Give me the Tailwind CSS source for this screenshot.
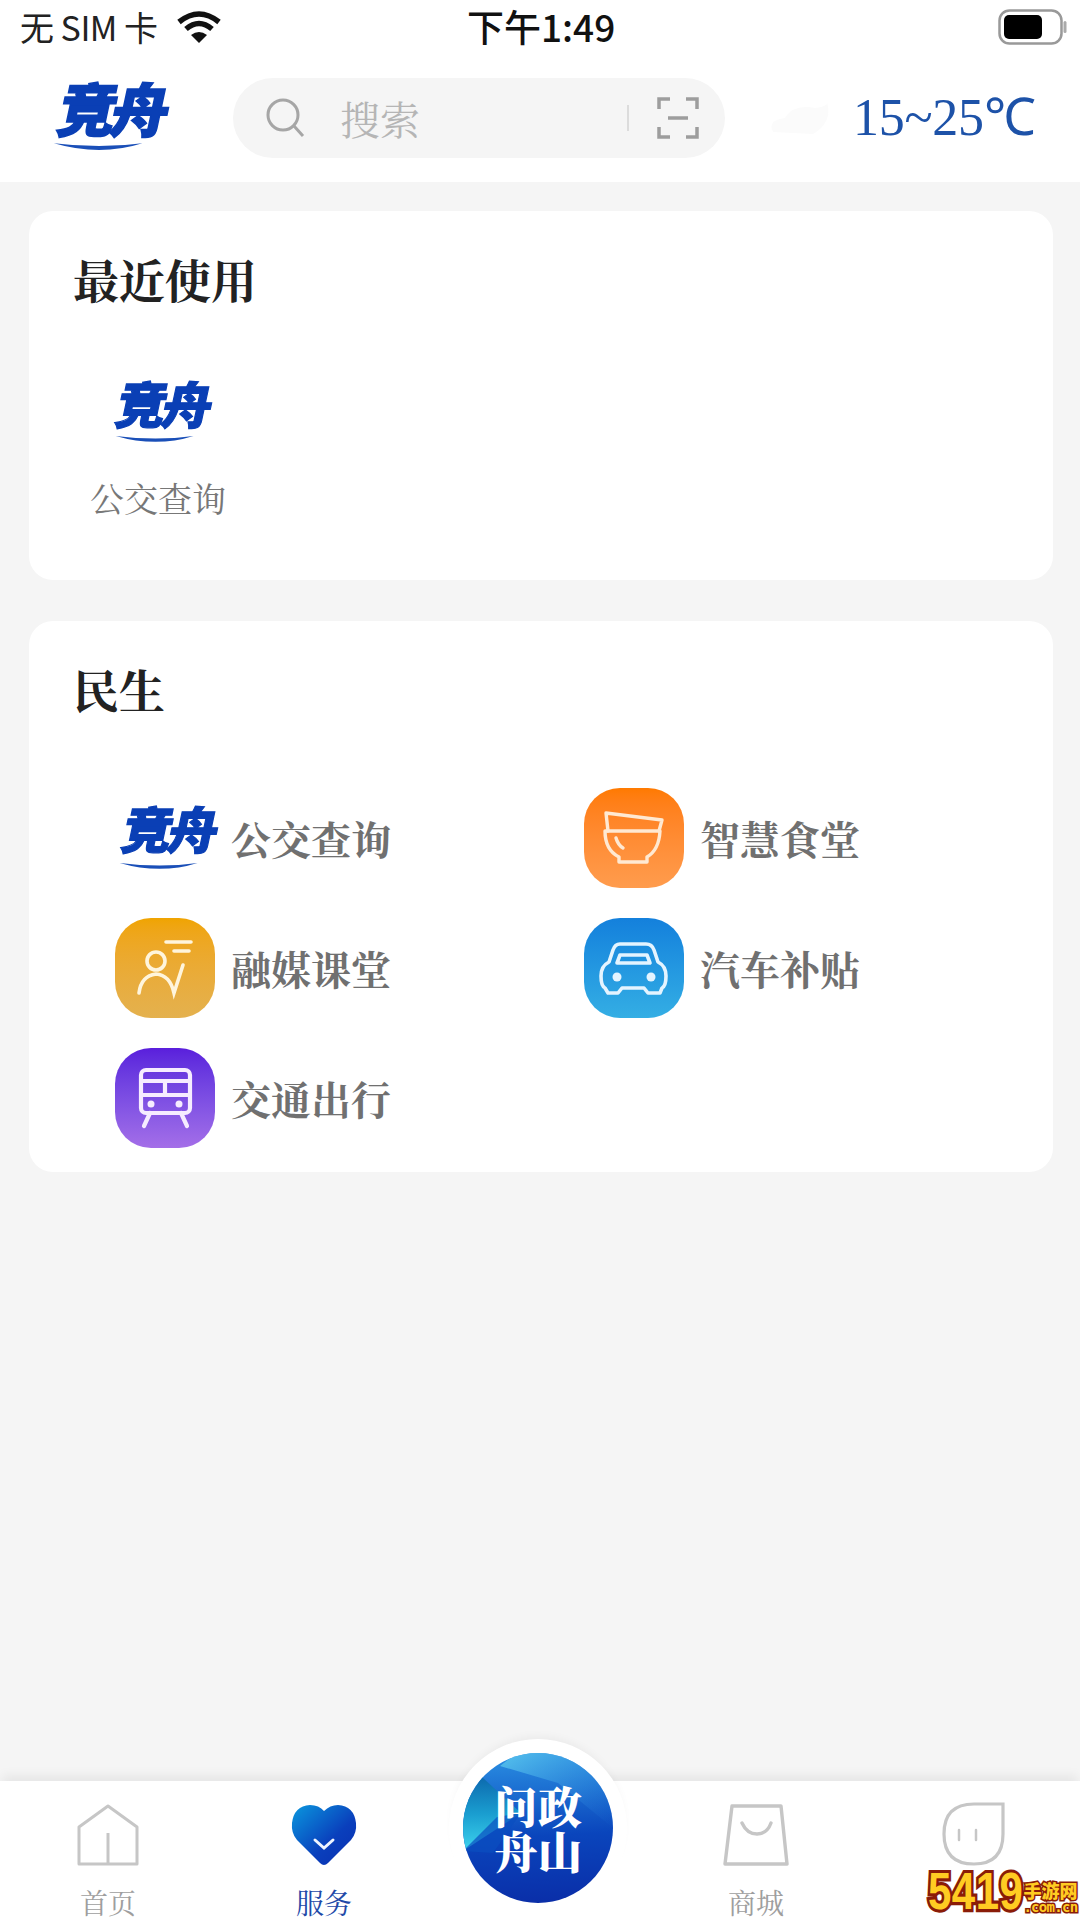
<!DOCTYPE html>
<html lang="zh">
<head>
<meta charset="utf-8">
<script src="https://cdn.jsdelivr.net/npm/@tailwindcss/browser@4"></script>
</head>
<body class="m-0">
<div class="relative w-[1080px] h-[1920px] overflow-hidden flex flex-col bg-[#f5f5f5] font-['Noto_Sans_CJK_SC',sans-serif]">

  <!-- top white area -->
  <div class="bg-white h-[182px] shrink-0 flex flex-col">
    <!-- status bar -->
    <div class="h-[54px] flex items-center justify-between pl-[20px] pr-[13px] relative">
      <div class="flex items-center gap-[18px]">
        <span class="text-[34px] leading-none text-[#222] tracking-[-0.5px]">无 SIM 卡</span>
        <svg width="46" height="36" viewBox="0 0 46 36" fill="none" stroke="#111" stroke-width="5.5">
          <path d="M3 13 Q23 -3 43 13"/><path d="M10 20 Q23 9 36 20"/><path d="M23 34 L15 26 Q23 20 31 26 Z" fill="#111" stroke="none"/>
        </svg>
      </div>
      <span class="absolute left-[467px] top-[5px] text-[37px] leading-[42px] font-medium text-[#111] whitespace-nowrap">下午1:49</span>
      <svg width="69" height="36" viewBox="0 0 69 36">
        <rect x="1.5" y="1.5" width="62" height="33" rx="10" fill="none" stroke="#999" stroke-width="2.5"/>
        <rect x="6" y="6" width="38" height="24" rx="5" fill="#000"/>
        <rect x="65.500" y="12" width="3" height="12" rx="1.5" fill="#aaa"/>
      </svg>
    </div>
    <!-- header -->
    <div class="flex items-center h-[80px] mt-[24px] pl-[50px]">
      <div class="w-[120px] h-[80px] relative shrink-0">
        <span class="block text-[#0a3fb5] font-black text-[58px] leading-[58px] tracking-[-5px] -skew-x-12 whitespace-nowrap ml-[10px] [-webkit-text-stroke:1.5px_#0a3fb5]">竞舟</span>
        <svg class="absolute left-[2px] top-[64px]" width="100" height="14" viewBox="0 0 104 14"><path d="M2 1 Q50 7 94 1 Q50 15 2 1Z" fill="#1a4fb8"/></svg>
      </div>
      <div class="ml-[63px] w-[492px] h-[80px] rounded-full bg-[#f5f5f5] flex items-center pl-[32px] pr-[26px]">
        <svg width="42" height="42" viewBox="0 0 42 42" fill="none" stroke="#a6a6a6" stroke-width="3"><circle cx="18" cy="18" r="15"/><path d="M29 29 L38 39"/></svg>
        <span class="ml-[33px] text-[40px] leading-none text-[#b5b5b5] font-['Noto_Serif_CJK_SC','Noto_Sans_CJK_SC',serif]">搜索</span>
        <div class="ml-auto w-[2px] h-[26px] bg-[#dcdcdc]"></div>
        <svg class="ml-[28px]" width="42" height="42" viewBox="0 0 42 42" fill="none" stroke="#9d9d9d" stroke-width="3.5"><path d="M2 12 V2 H13 M29 2 H40 V12 M2 30 V40 H13 M29 40 H40 V30"/><path d="M11 21 H31" /></svg>
      </div>
      <svg class="ml-[42px]" width="66" height="40" viewBox="0 0 66 40"><path d="M6 34 Q0 22 18 20 Q26 6 48 10 Q62 8 60 4 Q66 24 46 36 Z" fill="#fbfbfb"/></svg>
      <span class="ml-[20px] text-[52px] leading-none text-[#1d52a8] font-['Liberation_Serif',serif] whitespace-nowrap tracking-[-0.3px]">15~25℃</span>
    </div>
  </div>

  <!-- card 1 -->
  <section class="mt-[29px] ml-[29px] mr-[27px] h-[369px] rounded-[24px] bg-white shrink-0 pt-[41px] pl-[44px]">
    <h2 class="text-[46px] leading-[52px] font-bold text-[#222] font-['Noto_Serif_CJK_SC','Noto_Sans_CJK_SC',serif]">最近使用</h2>
    <div class="w-[140px] ml-[15px] mt-[71px] flex flex-col items-center">
      <div class="w-[100px] h-[66px] relative">
        <span class="block text-[#0a3fb5] font-black text-[50px] leading-[54px] tracking-[-4px] -skew-x-12 whitespace-nowrap ml-[10px] [-webkit-text-stroke:1.2px_#0a3fb5]">竞舟</span>
        <svg class="absolute left-[6px] top-[60px]" width="88" height="12" viewBox="0 0 104 14"><path d="M2 1 Q50 7 94 1 Q50 15 2 1Z" fill="#1a4fb8"/></svg>
      </div>
      <span class="mt-[37px] text-[34px] leading-[40px] text-[#777] whitespace-nowrap font-['Noto_Serif_CJK_SC','Noto_Sans_CJK_SC',serif]">公交查询</span>
    </div>
  </section>

  <!-- card 2 -->
  <section class="mt-[41px] ml-[29px] mr-[27px] h-[551px] rounded-[24px] bg-white shrink-0 pt-[41px] pl-[44px]">
    <h2 class="text-[46px] leading-[52px] font-bold text-[#222] font-['Noto_Serif_CJK_SC','Noto_Sans_CJK_SC',serif]">民生</h2>
    <div class="grid grid-cols-[469px_1fr] gap-y-[30px] mt-[74px] ml-[42px] text-[40px] leading-[46px] font-bold text-[#707070] font-['Noto_Serif_CJK_SC','Noto_Sans_CJK_SC',serif]">
      <div class="flex items-center gap-[16px]">
        <div class="w-[100px] h-[100px] relative font-['Noto_Sans_CJK_SC',sans-serif]">
          <span class="absolute left-[9px] top-[12px] block text-[#0a3fb5] font-black text-[50px] leading-[54px] tracking-[-4px] -skew-x-12 whitespace-nowrap [-webkit-text-stroke:1.2px_#0a3fb5]">竞舟</span>
          <svg class="absolute left-[3px] top-[74px]" width="88" height="12" viewBox="0 0 104 14"><path d="M2 1 Q50 7 94 1 Q50 15 2 1Z" fill="#1a4fb8"/></svg>
        </div>
        <span>公交查询</span>
      </div>
      <div class="flex items-center gap-[16px]">
        <div class="w-[100px] h-[100px] rounded-[36px] bg-gradient-to-b from-[#ff7a00] to-[#ff9c4d] flex items-center justify-center">
          <svg width="100" height="100" viewBox="0 0 100 100" fill="none" stroke="#ffe9d2" stroke-width="3.4" stroke-linejoin="round" stroke-linecap="round">
            <path d="M22 25 L78 32 L75 43 M22 25 L24 43"/>
            <path d="M21 43 H76 Q75 62 63 69 V74 H35 V69 Q21 62 21 43Z"/>
            <path d="M32 50 Q34 57 39 60"/>
          </svg>
        </div>
        <span>智慧食堂</span>
      </div>
      <div class="flex items-center gap-[16px]">
        <div class="w-[100px] h-[100px] rounded-[36px] bg-gradient-to-b from-[#f0a400] to-[#e4b14e] flex items-center justify-center">
          <svg width="100" height="100" viewBox="0 0 100 100" fill="none" stroke="#fff5dc" stroke-width="3.6" stroke-linecap="round">
            <circle cx="41" cy="43" r="9"/>
            <path d="M24 75 Q26 58 41 56 Q55 57 59 75 L68 47"/>
            <path d="M51 24 H76 M59 33 H74"/>
          </svg>
        </div>
        <span>融媒课堂</span>
      </div>
      <div class="flex items-center gap-[16px]">
        <div class="w-[100px] h-[100px] rounded-[36px] bg-gradient-to-b from-[#1480dc] to-[#34aee4] flex items-center justify-center">
          <svg width="100" height="100" viewBox="0 0 100 100" fill="none" stroke="#e4f4ff" stroke-width="3.6" stroke-linejoin="round">
            <path d="M36 26 H62 Q68 26 70 32 L74 44 Q82 48 82 58 Q82 68 78 70 L76 75 H64 L60 70 H38 L34 75 H24 L21 70 Q17 68 17 58 Q17 48 25 44 L29 32 Q31 26 36 26Z"/>
            <path d="M36 37 H63 L66 45 H33Z"/>
            <circle cx="33" cy="59" r="4.500" fill="#e4f4ff" stroke="none"/>
            <circle cx="67" cy="59" r="4.500" fill="#e4f4ff" stroke="none"/>
          </svg>
        </div>
        <span>汽车补贴</span>
      </div>
      <div class="flex items-center gap-[16px]">
        <div class="w-[100px] h-[100px] rounded-[36px] bg-gradient-to-b from-[#5a1edc] to-[#a46ee8] flex items-center justify-center">
          <svg width="100" height="100" viewBox="0 0 100 100" fill="none" stroke="#f6ecff" stroke-width="4.2" stroke-linecap="round">
            <rect x="26" y="22" width="49" height="43" rx="5"/>
            <path d="M26 33 H75 M26 47 H75 M50 33 V47"/>
            <circle cx="36" cy="56" r="3.500" fill="#f6ecff" stroke="none"/>
            <circle cx="64" cy="56" r="3.500" fill="#f6ecff" stroke="none"/>
            <path d="M35 65 L29 78 M66 65 L72 78"/>
          </svg>
        </div>
        <span>交通出行</span>
      </div>
    </div>
  </section>

  <!-- bottom nav -->
  <nav class="mt-auto relative h-[139px] bg-white shrink-0 grid grid-cols-5 shadow-[0_-8px_10px_-2px_rgba(0,0,0,0.06)] text-[28px] leading-[32px] text-[#9e9e9e] font-['Noto_Serif_CJK_SC','Noto_Sans_CJK_SC',serif]">
    <div class="flex flex-col items-center pt-[22px]">
      <svg width="64" height="64" viewBox="0 0 64 64" fill="none" stroke="#c6c6c6" stroke-width="3" stroke-linejoin="round"><path d="M3 24 L32 3 L61 24 V61 H3Z"/><path d="M32 30 V61"/></svg>
      <span class="mt-[19px]">首页</span>
    </div>
    <div class="flex flex-col items-center pt-[22px]">
      <svg width="68" height="64" viewBox="0 0 68 64">
        <defs><linearGradient id="h" x1="0" y1="0" x2="1" y2="1"><stop offset="0" stop-color="#0a98de"/><stop offset="0.6" stop-color="#0a3fbc"/><stop offset="1" stop-color="#0a2fb0"/></linearGradient></defs>
        <path d="M34 62 Q32 62 30 60 L7 37 Q1 30 2 20 Q4 3 20 2 Q29 2 34 8 Q40 2 48 2 Q64 3 66 20 Q67 30 61 37 L38 60 Q36 62 34 62Z" fill="url(#h)"/>
        <path d="M25 37 L34 45 L43 37" fill="none" stroke="#eef4ff" stroke-width="3" stroke-linecap="round"/>
      </svg>
      <span class="mt-[19px] text-[#1f4aa8]">服务</span>
    </div>
    <div></div>
    <div class="flex flex-col items-center pt-[22px]">
      <svg width="66" height="64" viewBox="0 0 66 64" fill="none" stroke="#c6c6c6" stroke-width="3.4" stroke-linejoin="round" stroke-linecap="round"><path d="M9 3 H58 L64 61 H2Z"/><path d="M19 20 Q24 31 34 31 Q44 31 48 20"/></svg>
      <span class="mt-[19px]">商城</span>
    </div>
    <div class="flex flex-col items-center pt-[20px] pl-[4px]">
      <svg width="66" height="66" viewBox="0 0 66 66" fill="none" stroke="#c6c6c6" stroke-width="3.2" stroke-linecap="round"><path d="M62 3 V33 Q62 63 33 63 Q3 63 3 33 Q3 3 33 3Z"/><path d="M18 29 V39 M35 29 V39" stroke-width="2.5"/></svg>
    </div>

    <!-- floating button -->
    <div class="absolute left-[449px] top-[-42px] w-[178px] h-[178px] rounded-full bg-white shadow-[0_-6px_10px_-4px_rgba(0,0,0,0.05)] flex items-center justify-center">
      <div class="relative w-[150px] h-[150px]">
        <svg class="absolute inset-0" width="150" height="150" viewBox="0 0 150 150">
          <defs>
            <linearGradient id="b" x1="0.55" y1="0" x2="0.6" y2="1"><stop offset="0" stop-color="#2a8fe2"/><stop offset="0.55" stop-color="#0a45bc"/><stop offset="1" stop-color="#0a2ea8"/></linearGradient>
            <linearGradient id="c" x1="0" y1="0" x2="0" y2="1"><stop offset="0" stop-color="#0d6aae"/><stop offset="0.5" stop-color="#1a9ed0"/><stop offset="1" stop-color="#3ed4ee"/></linearGradient>
            <linearGradient id="d" x1="0" y1="0" x2="1" y2="1"><stop offset="0" stop-color="#5ac8ee"/><stop offset="1" stop-color="#1f72d8" stop-opacity="0"/></linearGradient>
            <clipPath id="k"><circle cx="75" cy="75" r="75"/></clipPath>
          </defs>
          <circle cx="75" cy="75" r="75" fill="url(#b)"/>
          <g clip-path="url(#k)">
            <path d="M19 24 L58 60 L0 98 L-4 60Z" fill="url(#c)"/>
            <path d="M0 98 L34 64 L58 60 L30 100Z" fill="#0a4ec0" opacity="0.7"/>
            <path d="M37 13 L60 -5 L150 -5 L150 75 L95 30Z" fill="url(#d)"/>
          </g>
        </svg>
        <div class="absolute inset-0 grid grid-cols-[44px_44px] auto-rows-[45px] place-content-center font-black text-white text-[44px] leading-[45px] font-['Noto_Serif_CJK_SC','Noto_Sans_CJK_SC',serif]">
          <span>问</span><span>政</span><span>舟</span><span>山</span>
        </div>
      </div>
    </div>
  </nav>

  <!-- site watermark -->
  <div class="absolute left-[928px] top-[1866px] w-[152px] h-[54px] flex items-start font-black">
    <span class="inline-block origin-top scale-y-[1.25] text-[#ffcc22] text-[42px] leading-[40px] tracking-[0.5px] [-webkit-text-stroke:5px_#8a1c08] [paint-order:stroke_fill] font-['Liberation_Sans',sans-serif] whitespace-nowrap">5419</span>
    <div class="flex flex-col items-center ml-[0px] mt-[14px] w-[54px] shrink-0">
      <span class="text-[#ffcc22] text-[18px] leading-[20px] [-webkit-text-stroke:3px_#8a1c08] [paint-order:stroke_fill] whitespace-nowrap">手游网</span>
      <span class="text-[#ffcc22] text-[14px] leading-[15px] [-webkit-text-stroke:3px_#8a1c08] [paint-order:stroke_fill] font-['DejaVu_Sans_Mono',monospace] whitespace-nowrap tracking-[-0.7px]">.com.cn</span>
    </div>
  </div>
</div>
</body>
</html>
